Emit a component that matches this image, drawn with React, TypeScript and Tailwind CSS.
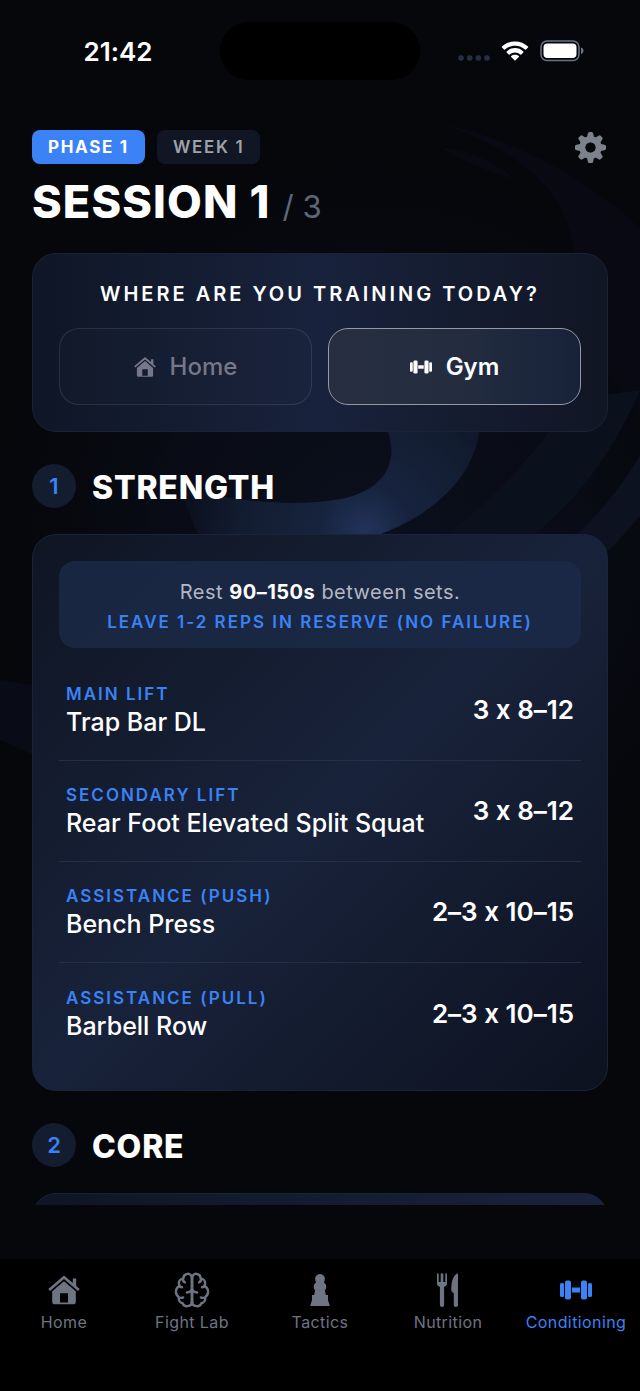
import { useState } from "react";
import type { ReactNode } from "react";

type Place = "home" | "gym";

const exercises = [
  { tag: "Main lift", name: "Trap Bar DL", sets: "3 x 8–12" },
  {
    tag: "Secondary lift",
    name: "Rear Foot Elevated Split Squat",
    sets: "3 x 8–12",
  },
  { tag: "Assistance (push)", name: "Bench Press", sets: "2–3 x 10–15" },
  { tag: "Assistance (pull)", name: "Barbell Row", sets: "2–3 x 10–15" },
];

//Icons

function HomeIcon({ className }: { className?: string }) {
  return (
    <svg viewBox="0 0 32 32" className={className} fill="currentColor" aria-hidden="true">
      <path d="M16 1.400 0.300 14.900l1.700 2L16 5l14 11.900 1.700-2-3.500-3V4.600h-3.400v4.300z" />
      <path
        fillRule="evenodd"
        d="M16 7.300 4.200 17.300V28a2.200 2.200 0 0 0 2.200 2.200h19.200a2.200 2.200 0 0 0 2.200-2.200V17.300zM12 19.300h8V28.600h-8z"
      />
    </svg>
  );
}

function BrainIcon({ className }: { className?: string }) {
  const half =
    "M18 5.200C17.200 2.400 14.600 1.400 12.400 2.100 10.200 2.800 9 4.600 9.100 6.800 6.400 7 4.400 9.200 4.500 11.600c0 1.200.3 2 .9 2.700C2.900 15.500 1.400 18 1.500 20.600c.1 2.200 1.200 4.200 3 5.300-.6 3 1.200 5.600 3.800 6.200.9 2.300 3 3.200 5.200 3 2.600-.2 4.500-1.600 4.500-4.400M8.500 7c.1 1.800.9 2.900 2.200 3.600M5.400 14.300c.6.8 1.300 1.200 2.300 1.400M4.500 25.900c1.500.9 3 .9 4.400.2M18 18.200c-1.300 1.700-3 2.700-5.200 2.800";
  return (
    <svg
      viewBox="0 0 36 37"
      className={className}
      fill="none"
      stroke="currentColor"
      strokeWidth="2.500"
      strokeLinecap="round"
      strokeLinejoin="round"
      aria-hidden="true"
    >
      <path d={half} />
      <path d={half} transform="matrix(-1 0 0 1 36 0)" />
      <path d="M18 5v26" strokeWidth="3" />
    </svg>
  );
}

function PawnIcon({ className }: { className?: string }) {
  return (
    <svg viewBox="0 0 20 34" className={className} fill="currentColor" aria-hidden="true">
      <path d="M10 1a5 5 0 0 1 4.700 6.600c-.2.800-.5 1.300-.8 1.800 1.500 1 2.400 2.500 2.400 4.300 0 1.400-.6 2.600-1.400 3.600L15.900 22h2.100v5.200L19.600 32v1H.4v-1L2 27.200V22h2.100l1-4.700c-.8-1-1.400-2.200-1.400-3.600 0-1.800.9-3.300 2.400-4.300-.3-.5-.6-1-.8-1.800A5 5 0 0 1 10 1z" />
    </svg>
  );
}

function CutleryIcon({ className }: { className?: string }) {
  return (
    <svg viewBox="0 0 22 36" className={className} fill="currentColor" aria-hidden="true">
      <path d="M0 1.400h1.700V10h2V1.400h2.600V10h2V1.400H10V11.500c0 1.700-1 2.700-2.900 3.400V33a2.100 2.100 0 0 1-4.200 0V14.900C1 14.200 0 13.200 0 11.500z" />
      <path d="M21 1.200V33a2.100 2.100 0 0 1-4.200 0V21.200c-1.600-.8-2.500-2-2.500-3.700C14.300 9 16.500 2.600 21 1.200z" />
    </svg>
  );
}

function DumbbellIcon({ className }: { className?: string }) {
  return (
    <svg viewBox="0 0 32 20" className={className} fill="currentColor" aria-hidden="true">
      <rect x="0" y="3" width="4" height="14" rx="1.500" />
      <rect x="5" y="0.500" width="6" height="19" rx="2" />
      <rect x="12" y="7.500" width="8" height="5" />
      <rect x="21" y="0.500" width="6" height="19" rx="2" />
      <rect x="28" y="3" width="4" height="14" rx="1.500" />
    </svg>
  );
}

function GearIcon({ className }: { className?: string }) {
  return (
    <svg viewBox="-15 -15 30 30" className={className} fill="currentColor" aria-hidden="true">
      {[0, 45, 90, 135].map((angle) => (
        <path
          key={angle}
          transform={`rotate(${angle})`}
          d="M-2.600-13.500Q-2.400-15-1.200-15h2.400Q2.400-15 2.600-13.500L3.600-9V9L2.600 13.500Q2.400 15 1.200 15h-2.400Q-2.400 15-2.600 13.500L-3.600 9V5.200L0 0l-3.600-5.200V-9z"
          clipPath="url(#gear-ring)"
        />
      ))}
      <circle r="8" fill="none" stroke="currentColor" strokeWidth="5.600" />
      <defs>
        <clipPath id="gear-ring">
          <path
            clipRule="evenodd"
            d="M-16-16h32v32h-32zM-5.300 0a5.300 5.300 0 1 0 10.600 0a5.300 5.300 0 1 0-10.600 0z"
          />
        </clipPath>
      </defs>
    </svg>
  );
}

//Swirl behind the content
function Backdrop() {
  return (
    <svg
      viewBox="0 0 640 1391"
      preserveAspectRatio="xMidYMin slice"
      className="absolute inset-0 h-full w-full"
      aria-hidden="true"
    >
      <defs>
        <radialGradient id="haze" gradientUnits="userSpaceOnUse" cx="370" cy="540" r="420">
          <stop offset="0" stopColor="#0d1424" stopOpacity="0.7" />
          <stop offset="0.5" stopColor="#0a0d1a" stopOpacity="0.7" />
          <stop offset="1" stopColor="#06070b" stopOpacity="0" />
        </radialGradient>
        <radialGradient id="glow" gradientUnits="userSpaceOnUse" cx="365" cy="530" r="180">
          <stop offset="0" stopColor="#22335a" />
          <stop offset="0.25" stopColor="#17233e" />
          <stop offset="0.7" stopColor="#121c30" />
          <stop offset="1" stopColor="#0b101e" />
        </radialGradient>
      </defs>
      <rect width="640" height="1391" fill="#06070b" />
      <rect y="100" width="640" height="900" fill="url(#haze)" />
      <path
        d="M436 122C530 142 600 190 640 228V420C600 370 576 310 574 250C566 190 520 150 436 122z"
        fill="#090913"
      />
      <path d="M440 147c30 2 55 16 76 32-28-6-58-20-76-32z" fill="#090911" />
      <path d="M640 390C610 460 570 510 520 545H430C500 500 545 440 570 400z" fill="#0b101d" />
      <path d="M640 455C620 490 590 525 560 550h50l30-34z" fill="#0c1220" />
      <path
        d="M385 425C400 455 390 490 340 499C290 508 240 500 180 490C190 515 195 530 205 545H345C410 530 475 490 480 425z"
        fill="url(#glow)"
      />
      <path d="M0 680l36 6v70L0 740z" fill="#090c17" />
    </svg>
  );
}

//Layout pieces

function SectionTitle({ number, children }: { number: number; children: ReactNode }) {
  return (
    <div className="flex items-center gap-4">
      <span className="flex h-11 w-11 items-center justify-center rounded-full bg-[#141c2f] text-[22px] font-semibold text-[#3b82f6]">
        {number}
      </span>
      <h2 className="pt-1 text-[32px] leading-10 font-extrabold tracking-wide uppercase">
        {children}
      </h2>
    </div>
  );
}

function PlaceButton({
  label,
  icon,
  active,
  onClick,
}: {
  label: string;
  icon: ReactNode;
  active: boolean;
  onClick: () => void;
}) {
  return (
    <button
      type="button"
      aria-pressed={active}
      onClick={onClick}
      className={`flex h-[77px] flex-1 items-center justify-center gap-3.5 rounded-[20px] border text-2xl ${
        active
          ? "border-[#9699a1] bg-gradient-to-r from-[#262e40] via-[#242d40] to-[#172239] font-semibold text-white"
          : "border-white/10 bg-white/1 font-medium text-[#74788a]"
      }`}
    >
      {icon}
      {label}
    </button>
  );
}

function TabLink({
  label,
  icon,
  active,
}: {
  label: string;
  icon: ReactNode;
  active?: boolean;
}) {
  return (
    <a
      href="#"
      aria-current={active ? "page" : undefined}
      className={`flex flex-1 flex-col items-center text-base tracking-wide ${
        active ? "text-[#3b82f6]" : "text-[#6f7483]"
      }`}
    >
      <span className="flex h-9 items-center">{icon}</span>
      <span className="mt-0.5 whitespace-nowrap">{label}</span>
    </a>
  );
}

export default function App() {
  const [place, setPlace] = useState<Place>("gym");

  return (
    <div className="relative flex h-screen flex-col bg-[#06070b] font-['Inter',sans-serif] text-white [font-feature-settings:'calt'_0]">
      <Backdrop />

      {/* Status bar */}
      <div className="relative grid grid-cols-[1fr_200px_1fr] items-center pt-[22px]">
        <span className="pl-4 text-center text-[26px] font-semibold">21:42</span>
        <span className="h-[58px] rounded-full bg-black" />
        <div className="flex items-center justify-end pr-14">
          <svg viewBox="0 0 32 20" className="h-5 w-8" fill="#272f45" aria-hidden="true">
            <circle cx="3" cy="17" r="2.800" />
            <circle cx="11.700" cy="17" r="2.800" />
            <circle cx="20.300" cy="17" r="2.800" />
            <circle cx="29" cy="17" r="2.800" />
          </svg>
          <svg viewBox="0 0 28 20" className="ml-[11px] h-5 w-7" fill="white" aria-hidden="true">
            <path d="M14 .4c5 0 9.600 1.900 13 5.200.3.300.3.700 0 1l-2 2c-.3.300-.7.300-1 0A14.200 14.200 0 0 0 14 4.700C10.200 4.700 6.600 6.200 4 8.600c-.3.300-.7.300-1 0l-2-2c-.3-.3-.3-.7 0-1C4.400 2.300 9 .4 14 .4z" />
            <path d="M14 7.100c3.200 0 6.100 1.200 8.300 3.300.3.300.3.700 0 1l-2 2c-.3.300-.7.300-1 0A7.700 7.700 0 0 0 14 11.400c-2 0-3.900.7-5.300 2-.3.300-.7.300-1 0l-2-2c-.3-.3-.3-.7 0-1C7.900 8.300 10.800 7.100 14 7.100z" />
            <path d="M14 13.700c1.500 0 2.800.5 3.800 1.300.3.300.3.700 0 1l-3.300 3.300c-.3.300-.7.300-1 0L10.200 16c-.3-.3-.3-.7 0-1 1-.8 2.300-1.300 3.800-1.300z" />
          </svg>
          <svg viewBox="0 0 44 22" className="ml-[11px] h-[22px] w-11" aria-hidden="true">
            <rect x="1" y="1" width="38" height="19.500" rx="6" fill="none" stroke="#6c7385" strokeWidth="1.500" />
            <rect x="3.500" y="3.500" width="33" height="14.500" rx="4" fill="white" />
            <path d="M41 7.500c1.600.5 2.500 1.700 2.500 3.200S42.600 13.500 41 14z" fill="#6c7385" />
          </svg>
        </div>
      </div>

      <main className="relative mt-[50px] flex min-h-0 flex-1 flex-col overflow-y-auto px-8 [scrollbar-width:none]">
        {/* Session header */}
        <header className="flex shrink-0 items-start justify-between">
          <div>
            <div className="flex gap-3 text-[17px] font-semibold tracking-widest">
              <span className="flex h-[34px] items-center rounded-lg bg-[#3b82f6] px-4 pt-0.5 font-bold">
                PHASE 1
              </span>
              <span className="flex h-[34px] items-center rounded-lg bg-[#111624] px-4 pt-0.5 text-[#a0a2a8]">
                WEEK 1
              </span>
            </div>
            <h1 className="mt-3 flex items-baseline gap-3 text-[45px] leading-[52px] font-extrabold tracking-wide">
              SESSION 1
              <span className="text-[31px] font-normal tracking-normal text-[#5f6678]">/ 3</span>
            </h1>
          </div>
          <button type="button" aria-label="Settings" className="pt-0.5 pr-0.5 text-[#7d818c]">
            <GearIcon className="h-[31px] w-[31px]" />
          </button>
        </header>

        {/* Where to train */}
        <section className="mt-5 shrink-0 rounded-3xl border border-[#1a2236] bg-gradient-to-r from-[#0f1626] via-[#18223c] to-[#111624] p-[26px]">
          <h2 className="text-center text-xl leading-7 font-semibold tracking-[3px] uppercase">
            Where are you training today?
          </h2>
          <div className="mt-5 flex gap-4">
            <PlaceButton
              label="Home"
              icon={<HomeIcon className="h-[22px] w-[22px]" />}
              active={place === "home"}
              onClick={() => setPlace("home")}
            />
            <PlaceButton
              label="Gym"
              icon={<DumbbellIcon className="h-3.5 w-[22px]" />}
              active={place === "gym"}
              onClick={() => setPlace("gym")}
            />
          </div>
        </section>

        <div className="mt-8 shrink-0">
          <SectionTitle number={1}>Strength</SectionTitle>
        </div>

        <section className="mt-[26px] shrink-0 rounded-3xl border border-[#1a2438] bg-gradient-to-br from-[#0f1523] via-[#18223a] to-[#0d1220] p-[26px]">
          <div className="rounded-2xl bg-[#1b2a48]/80 pt-[15px] pb-3 text-center">
            <p className="text-xl leading-8 tracking-wide text-[#b3b7c1]">
              Rest <strong className="font-bold text-white">90–150s</strong> between sets.
            </p>
            <p className="text-[17px] leading-7 font-semibold tracking-[2px] text-[#3b82f6] uppercase">
              Leave 1-2 reps in reserve (no failure)
            </p>
          </div>
          <ul className="mt-3 divide-y divide-[#252e42]">
            {exercises.map((exercise) => (
              <li key={exercise.name} className="flex h-[101px] items-center justify-between px-[7px]">
                <div>
                  <p className="text-[17px] leading-6 font-semibold tracking-[2px] text-[#3b82f6] uppercase">
                    {exercise.tag}
                  </p>
                  <p className="text-[25px] leading-8 font-medium">{exercise.name}</p>
                </div>
                <p className="text-[26px] leading-8 font-semibold">{exercise.sets}</p>
              </li>
            ))}
          </ul>
        </section>

        <div className="mt-8 shrink-0">
          <SectionTitle number={2}>Core</SectionTitle>
        </div>

        <section className="mt-[26px] h-40 shrink-0 rounded-3xl border border-[#1a2236] bg-gradient-to-r from-[#0f1525] to-[#18233c]" />
      </main>

      {/* Bottom tabs */}
      <nav className="relative mt-[54px] flex h-[132px] shrink-0 bg-black pt-[13px]">
        <TabLink label="Home" icon={<HomeIcon className="h-8 w-8" />} />
        <TabLink label="Fight Lab" icon={<BrainIcon className="h-9 w-9" />} />
        <TabLink label="Tactics" icon={<PawnIcon className="h-[34px] w-5" />} />
        <TabLink label="Nutrition" icon={<CutleryIcon className="h-9 w-[22px]" />} />
        <TabLink label="Conditioning" icon={<DumbbellIcon className="h-5 w-8" />} active />
      </nav>
    </div>
  );
}
